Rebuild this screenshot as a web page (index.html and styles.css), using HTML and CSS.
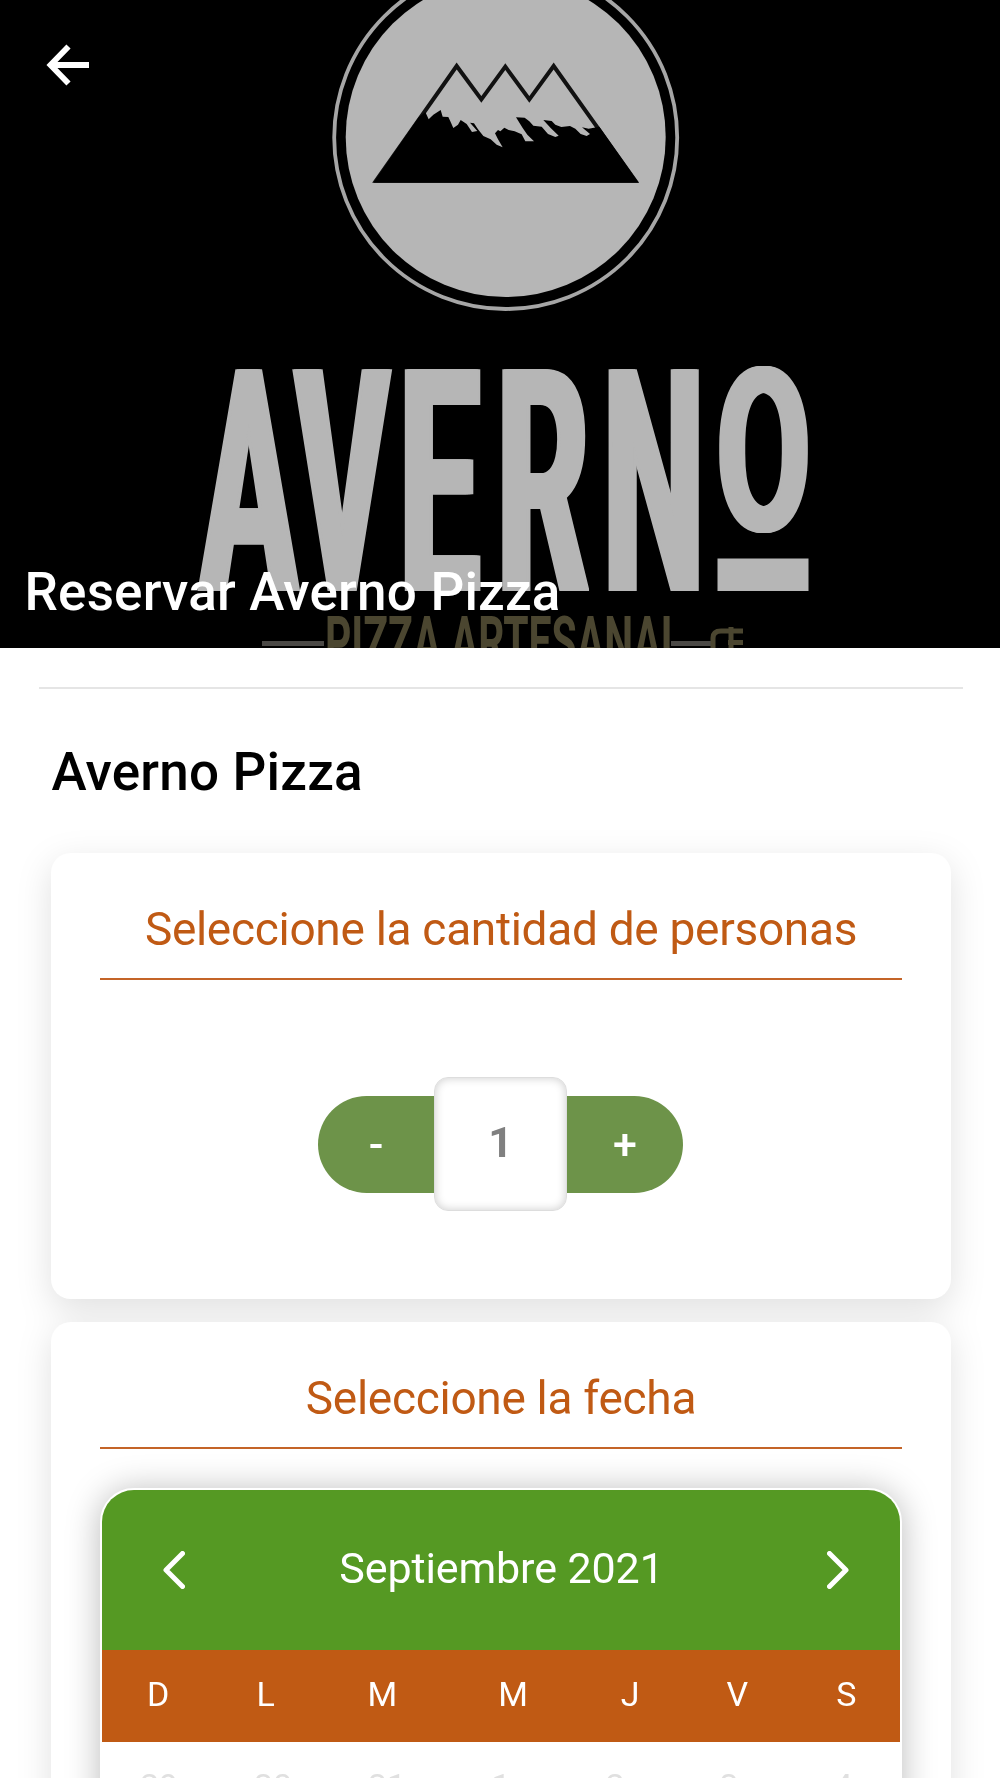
FILE: index.html
```html
<!DOCTYPE html>
<html lang="es">
<head>
    <meta charset="UTF-8">
    <meta name="viewport" content="width=device-width, initial-scale=1.0">
    <title>Reservar Averno Pizza</title>
    <link rel="stylesheet" href="styles.css">
</head>
<body>

<header class="portada">
    <svg class="portada-imagen" viewBox="0 0 1000 648">
        <!-- Escudo -->
        <circle cx="505.7" cy="137.5" r="171.5" fill="none" stroke="#a6a6a6" stroke-width="3.8"/>
        <circle cx="505.7" cy="137" r="160" fill="#b6b6b6"/>
        <g transform="translate(320 0) scale(0.33333)">
            <path d="M168 542 L410 198 L484 298 L556 200 L628 298 L701 198 L946 542 Z" fill="none" stroke="#111" stroke-width="12"/>
            <path d="M160 548 L296 352 L316 336 L326 358 L340 344 L362 330 L368 350 L385 351 L392 366 L400 384 L414 374 L422 360 L440 372 L456 396 L472 393 L450 368 L462 370 L474 388 L490 408 L512 418 L530 434 L548 442 L534 418 L525 400 L534 390 L541 394 L553 383 L566 390 L584 394 L605 403 L616 424 L642 424 L622 404 L608 384 L588 352 L614 353 L628 364 L640 377 L665 380 L684 402 L706 411 L716 407 L692 384 L670 360 L695 363 L706 374 L724 381 L750 378 L766 386 L782 402 L800 408 L810 402 L786 382 L806 386 L838 380 L956 548 Z" fill="#000"/>
        </g>
        <!-- Nombre -->
        <text class="logo-nombre" transform="translate(0 591) scale(0.46 1)" x="436 642 868 1080 1311">AVERN</text>
        <text class="logo-o" transform="translate(0 530.5) scale(0.6 1)" x="1194">O</text>
        <rect x="717.5" y="558.5" width="91" height="32.5" fill="#b6b6b6"/>
        <!-- Subtitulo -->
        <text class="logo-subtitulo" transform="translate(325 665) scale(0.5 1)" x="0" y="0" textLength="716" lengthAdjust="spacingAndGlyphs">PIZZA ARTESANAL</text>
        <path d="M262 643.5 H324 M671 643.5 H712" stroke="#4b4946" stroke-width="5"/>
        <path d="M713 648 V638 Q713 631 721 631 H743 M728 642.5 H743 M731 627 V648" fill="none" stroke="#4b4630" stroke-width="5"/>
    </svg>
    <svg class="volver" viewBox="0 0 44 42">
        <path d="M43 21 H6 M22.500 2.500 L4.500 21 L22.500 39.500" fill="none" stroke="#fff" stroke-width="5.800"/>
    </svg>
    <h1 class="portada-titulo">Reservar Averno Pizza</h1>
</header>

<hr class="separador">

<h2 class="nombre">Averno Pizza</h2>

<main class="tarjetas">
    <section class="tarjeta">
        <h3 class="tarjeta-titulo">Seleccione la cantidad de personas</h3>
        <div class="contador">
            <button class="boton menos">-</button>
            <div class="cantidad">1</div>
            <button class="boton mas">+</button>
        </div>
    </section>

    <section class="tarjeta tarjeta-fecha">
        <h3 class="tarjeta-titulo">Seleccione la fecha</h3>
        <div class="calendario">
            <div class="mes">
                <svg class="flecha" viewBox="0 0 22 38">
                    <path d="M19.500 2.500 L3 19 L19.500 35.500" fill="none" stroke="#fff" stroke-width="5" stroke-linecap="round" stroke-linejoin="round"/>
                </svg>
                <span class="mes-nombre">Septiembre 2021</span>
                <svg class="flecha" viewBox="0 0 22 38">
                    <path d="M2.500 2.500 L19 19 L2.500 35.500" fill="none" stroke="#fff" stroke-width="5" stroke-linecap="round" stroke-linejoin="round"/>
                </svg>
            </div>
            <table class="semana">
                <tr>
                    <td>D</td>
                    <td>L</td>
                    <td>M</td>
                    <td>M</td>
                    <td>J</td>
                    <td>V</td>
                    <td>S</td>
                </tr>
            </table>
            <div class="dias">
                <span>29</span>
                <span>30</span>
                <span>31</span>
                <span>1</span>
                <span>2</span>
                <span>3</span>
                <span>4</span>
            </div>
        </div>
    </section>
</main>

</body>
</html>
```
FILE: styles.css
```css
* {
    box-sizing: border-box;
}

body {
    margin: 0;
    height: 1778px;
    overflow: hidden;
    background: #fff;
    font-family: Roboto, "Liberation Sans", sans-serif;
}

h1, h2, h3 {
    margin: 0;
    font-weight: 500;
}

.portada {
    position: relative;
    height: 648px;
    background: #000;
    overflow: hidden;
}

.portada-imagen {
    display: block;
    width: 1000px;
    height: 648px;
}

/* las sombras engordan solo los trazos verticales */
.logo-nombre {
    font-size: 312px;
    font-weight: 700;
    fill: #b6b6b6;
    text-shadow: -6px 0 #b6b6b6, -3px 0 #b6b6b6, 3px 0 #b6b6b6, 6px 0 #b6b6b6;
}

.logo-o {
    font-size: 228px;
    font-weight: 700;
    fill: #b6b6b6;
    text-shadow: -4px 0 #b6b6b6, -2px 0 #b6b6b6, 2px 0 #b6b6b6, 4px 0 #b6b6b6;
}

.logo-subtitulo {
    font-size: 68px;
    font-weight: 700;
    fill: #4b4630;
}

.volver {
    position: absolute;
    left: 46px;
    top: 44px;
    width: 44px;
    height: 42px;
}

.portada-titulo {
    position: absolute;
    left: 24.5px;
    bottom: 25px;
    font-size: 53px;
    letter-spacing: 0.2px;
    line-height: 62px;
    color: #fff;
    white-space: nowrap;
}

.separador {
    margin: 39px 37px 0 39px;
    border: none;
    height: 2px;
    background: #e5e5e5;
}

.nombre {
    margin: 52px 0 0 51.5px;
    font-size: 53px;
    letter-spacing: 0.2px;
    line-height: 62px;
    color: #000;
}

.tarjetas {
    display: flex;
    flex-direction: column;
    gap: 23px;
    padding: 50px 49px 0 51px;
    filter: drop-shadow(0 10px 17px rgba(0, 0, 0, 0.12));
}

.tarjeta {
    height: 446px;
    padding: 49px 49px 0;
    border-radius: 20px;
    background: #fff;
}

.tarjeta-fecha {
    height: 540px;
}

.tarjeta-titulo {
    height: 78px;
    border-bottom: 2px solid #c46428;
    font-size: 46px;
    font-weight: 400;
    letter-spacing: -0.3px;
    line-height: 54px;
    text-align: center;
    color: #c05a14;
    white-space: nowrap;
}

.contador {
    display: flex;
    align-items: center;
    justify-content: center;
    margin-top: 97px;
    padding-right: 1px;
}

.boton {
    width: 116px;
    height: 97px;
    padding: 0;
    border: none;
    background: #6d9349;
    color: #fff;
    font-family: inherit;
    font-size: 43px;
    font-weight: 500;
}

.menos {
    border-radius: 49px 0 0 49px;
}

.mas {
    border-radius: 0 49px 49px 0;
}

.cantidad {
    width: 133px;
    height: 134px;
    border: 1px solid #ddd;
    border-radius: 14px;
    background: #fff;
    box-shadow: inset 0 0 10px rgba(0, 0, 0, 0.2);
    font-size: 43px;
    font-weight: 700;
    line-height: 128px;
    text-align: center;
    color: #808080;
}

.calendario {
    height: 540px;
    margin-top: 39px;
    border: 2px solid #fff;
    border-radius: 34px;
    background: #fff;
    box-shadow: 0 2px 34px rgba(0, 0, 0, 0.27);
    overflow: hidden;
}

.mes {
    display: flex;
    align-items: center;
    justify-content: space-between;
    height: 160px;
    padding: 0 51px 0 61px;
    background: #559923;
    color: #fff;
}

.mes-nombre {
    padding: 0 9px 5px 0;
    font-size: 43px;
    letter-spacing: -0.1px;
}

.flecha {
    width: 22px;
    height: 38px;
}

.semana {
    width: 100%;
    height: 92px;
    border-spacing: 0;
    background: #c05a14;
    font-size: 34px;
    text-align: center;
    color: #fff;
}

.semana td {
    padding: 0 11.5px 4px;
}

.dias {
    display: grid;
    grid-template-columns: repeat(7, 114px);
    padding-top: 24px;
    font-size: 34px;
    line-height: 40px;
    text-align: center;
    color: #e0e0e0;
}
```
